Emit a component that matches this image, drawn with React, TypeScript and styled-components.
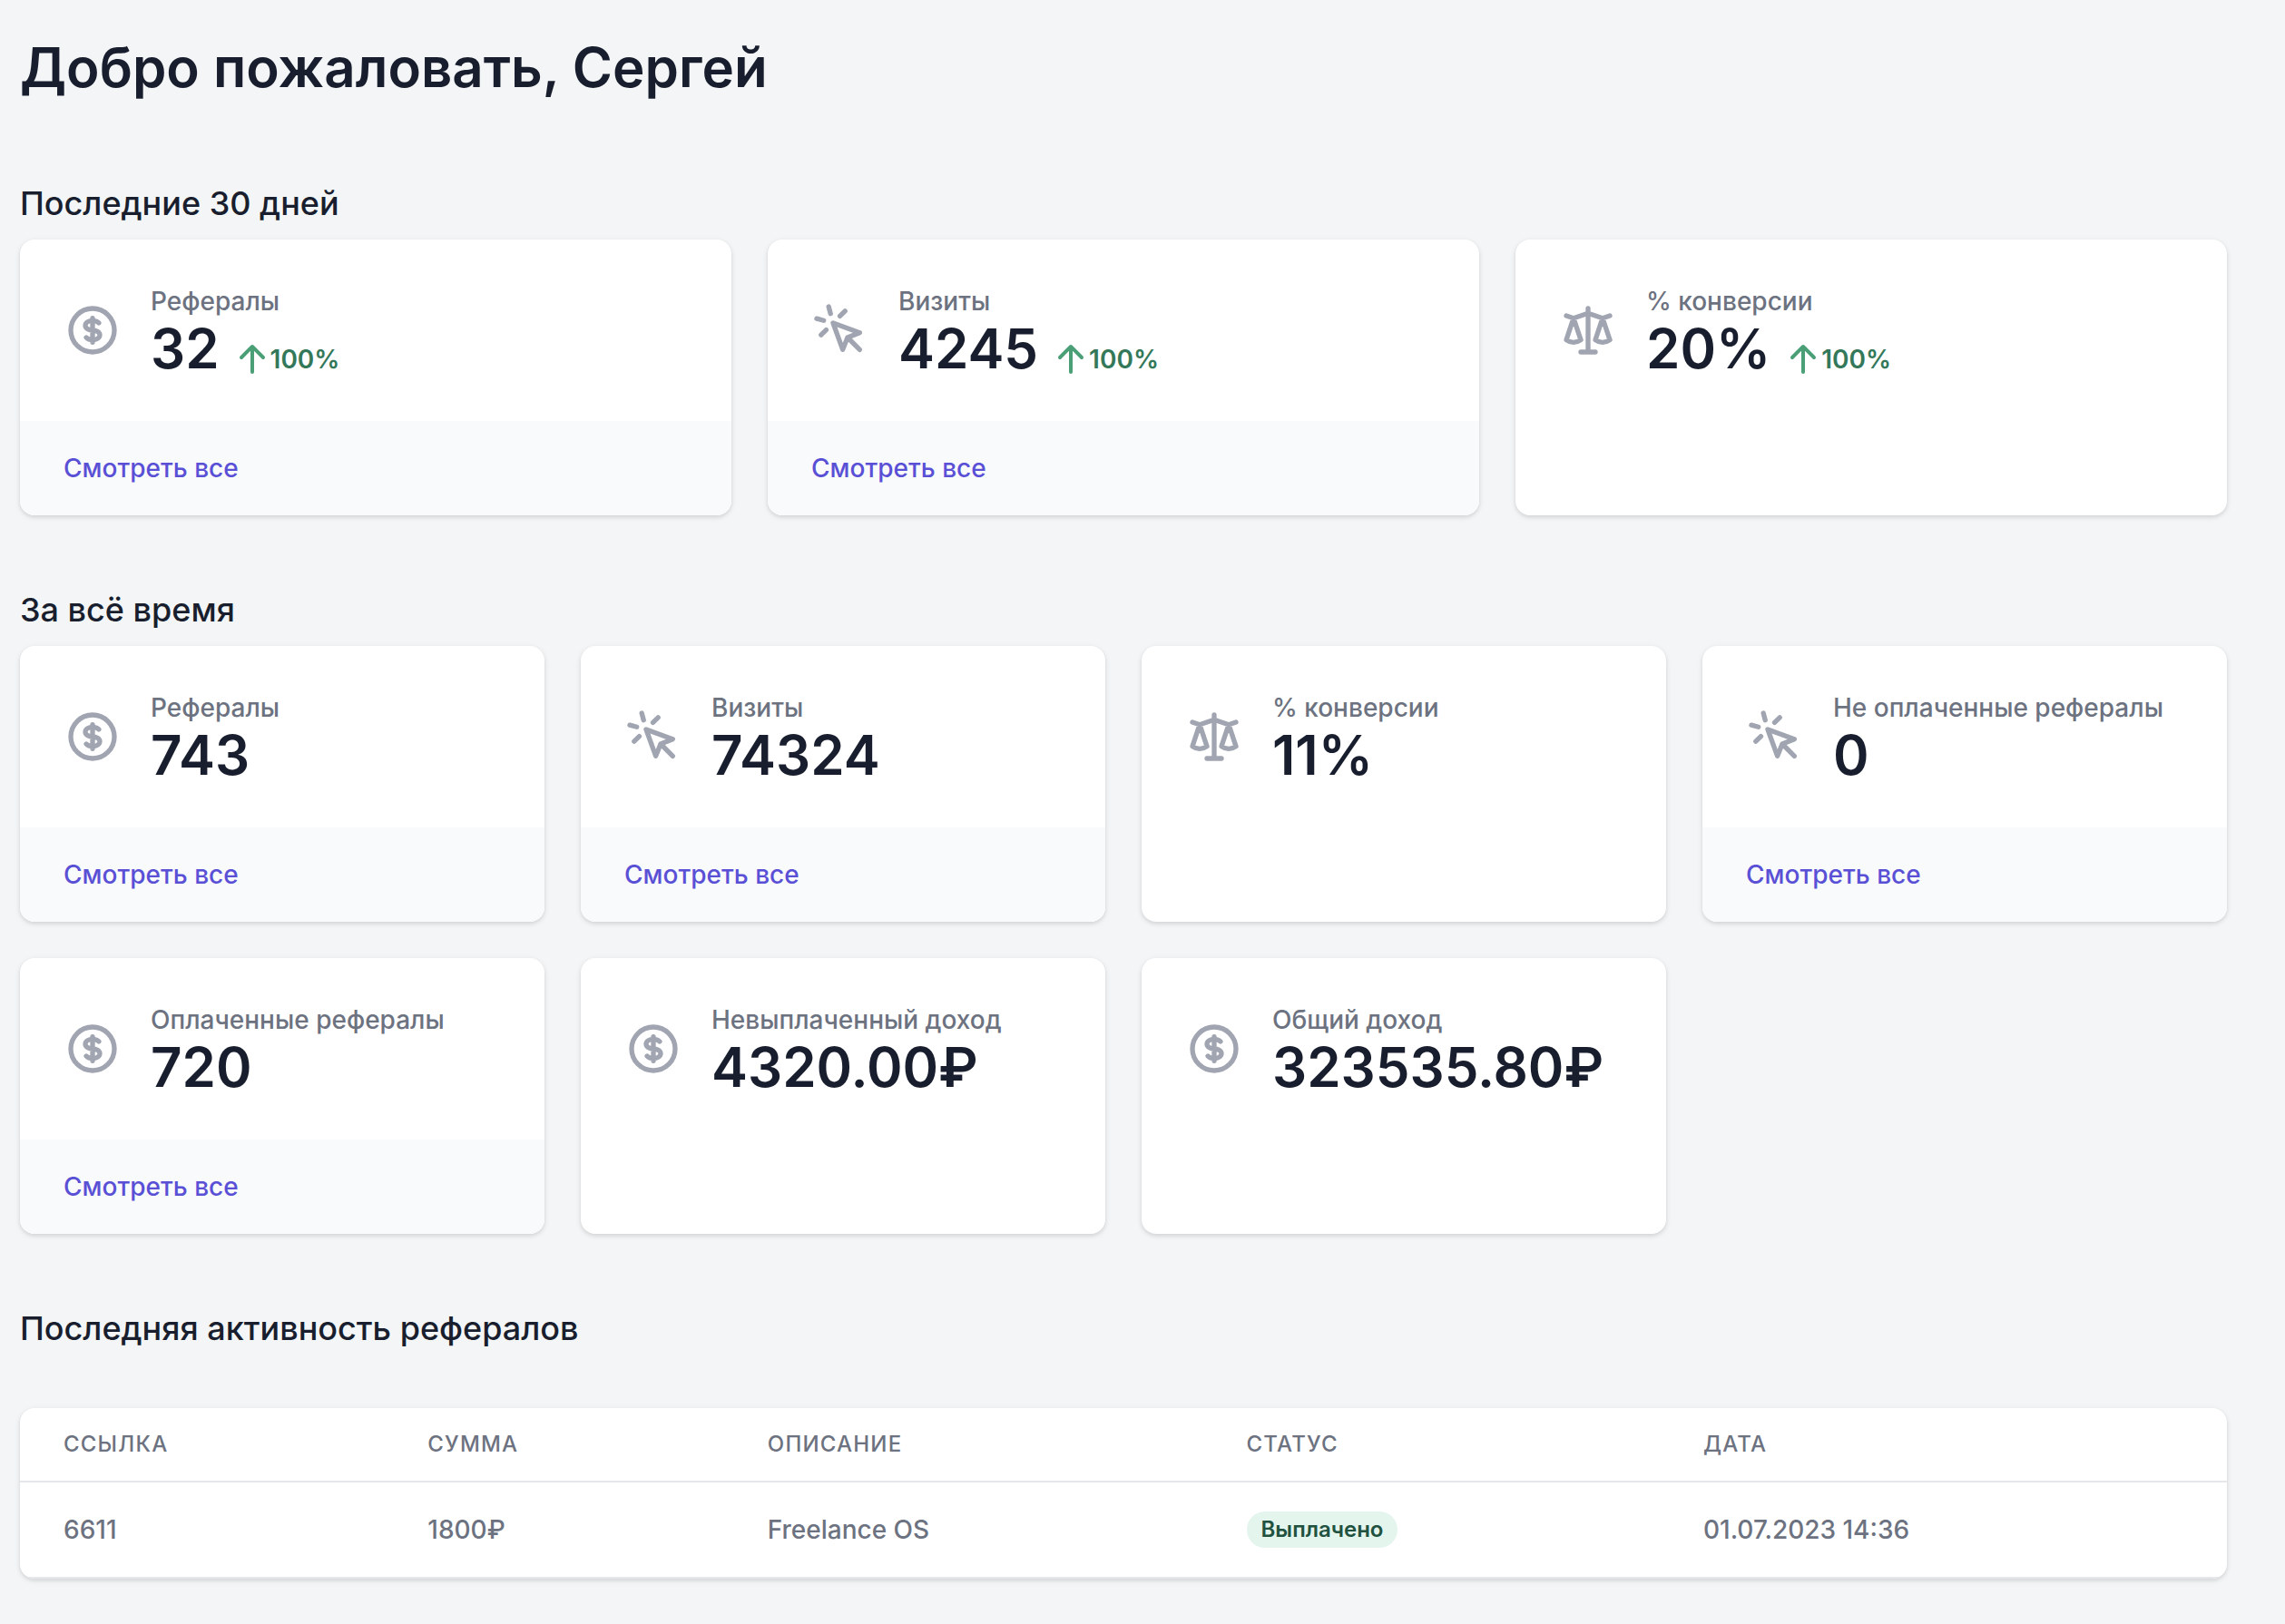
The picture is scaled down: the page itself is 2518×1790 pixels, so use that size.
import React from "react";
import styled, { createGlobalStyle } from "styled-components";

const GlobalStyle = createGlobalStyle`
  *, *::before, *::after { box-sizing: border-box; }
  body {
    margin: 0;
    background: #f3f5f7;
    color: #181e2d;
    font-family: Inter, "Noto Sans", sans-serif;
    font-size: 28px;
    line-height: 40px;
  }
  h1, h2, p, dl, dt, dd { margin: 0; }
`;

const Page = styled.main`
  padding: 44px 64px 50px 22px;
`;

const Title = styled.h1`
  font-size: 60px;
  line-height: 60px;
  font-weight: 600;
  margin-bottom: 96px;
`;

const Section = styled.section`
  & + & {
    margin-top: 80px;
  }
`;

const SectionTitle = styled.h2<{ $gap: number }>`
  font-size: 36px;
  line-height: 48px;
  font-weight: 500;
  margin-bottom: ${(p) => p.$gap}px;
`;

const CardGrid = styled.div<{ $columns: number }>`
  display: grid;
  grid-template-columns: repeat(${(p) => p.$columns}, minmax(0, 1fr));
  gap: 40px;
`;

const surface = `
  background: #ffffff;
  border-radius: 16px;
  overflow: hidden;
  box-shadow: 0 2px 6px rgba(0, 0, 0, 0.1), 0 2px 4px rgba(0, 0, 0, 0.06);
`;

const CardBox = styled.article`
  ${surface}
  display: flex;
  flex-direction: column;
`;

const CardBody = styled.div`
  display: flex;
  align-items: center;
  gap: 32px;
  padding: 48px;
`;

const CardIcon = styled.svg`
  flex: none;
  width: 64px;
  height: 64px;
  fill: none;
  stroke: #a0a5b1;
  stroke-width: 2;
  stroke-linecap: round;
  stroke-linejoin: round;
`;

const Label = styled.dt`
  color: #6c727f;
  font-weight: 500;
  white-space: nowrap;
`;

const ValueRow = styled.dd`
  display: flex;
  align-items: baseline;
  gap: 16px;
`;

const Value = styled.span`
  font-size: 60px;
  line-height: 64px;
  font-weight: 600;
`;

const Trend = styled.span`
  display: flex;
  align-items: baseline;
  color: #34785a;
  font-weight: 600;
`;

const TrendIcon = styled.svg`
  align-self: center;
  width: 40px;
  height: 40px;
  fill: #4a9f76;
`;

const CardFooter = styled.div`
  padding: 32px 48px;
  background: #f9fafc;
`;

const FooterLink = styled.a`
  color: #5a50d6;
  font-weight: 500;
  text-decoration: none;
`;

const TableBox = styled.div`
  ${surface}
`;

const Table = styled.table`
  width: 100%;
  border-collapse: separate;
  border-spacing: 0;
  table-layout: fixed;
  text-align: left;
`;

const HeadCell = styled.th<{ $width: string }>`
  width: ${(p) => p.$width};
  padding: 24px 48px;
  border-bottom: 2px solid #e5e7eb;
  color: #6c727f;
  font-size: 24px;
  line-height: 32px;
  font-weight: 500;
  letter-spacing: 0.05em;
  text-transform: uppercase;
`;

const Cell = styled.td`
  padding: 32px 48px;
  border-bottom: 2px solid #e5e7eb;
  color: #6c727f;
  font-weight: 500;
`;

const Badge = styled.span`
  display: inline-block;
  vertical-align: top;
  padding: 0 16px;
  border-radius: 20px;
  background: #e4f5ee;
  color: #21523f;
  font-size: 24px;
  font-weight: 600;
`;

const iconPaths = {
  dollar:
    "M12 8c-1.657 0-3 .895-3 2s1.343 2 3 2 3 .895 3 2-1.343 2-3 2m0-8c1.11 0 2.08.402 2.599 1M12 8V7m0 1v8m0 0v1m0-1c-1.11 0-2.08-.402-2.599-1M21 12a9 9 0 11-18 0 9 9 0 0118 0z",
  click:
    "M15 15l-2 5L9 9l11 4-5 2zm0 0l5 5M7.188 2.239l.777 2.897M5.136 7.965l-2.898-.777M13.95 4.05l-2.122 2.122m-5.657 5.656l-2.12 2.122",
  scale:
    "M3 6l3 1m0 0l-3 9a5.002 5.002 0 006.001 0M6 7l3 9M6 7l6-2m6 2l3-1m-3 1l-3 9a5.002 5.002 0 006.001 0M18 7l3 9m-3-9l-6-2m0-2v2m0 16V5m0 16H9m3 0h3",
};

type Stat = {
  icon: keyof typeof iconPaths;
  label: string;
  value: string;
  trend?: string;
  link?: boolean;
};

const recent: Stat[] = [
  { icon: "dollar", label: "Рефералы", value: "32", trend: "100%", link: true },
  { icon: "click", label: "Визиты", value: "4245", trend: "100%", link: true },
  { icon: "scale", label: "% конверсии", value: "20%", trend: "100%" },
];

const allTime: Stat[] = [
  { icon: "dollar", label: "Рефералы", value: "743", link: true },
  { icon: "click", label: "Визиты", value: "74324", link: true },
  { icon: "scale", label: "% конверсии", value: "11%" },
  { icon: "click", label: "Не оплаченные рефералы", value: "0", link: true },
  { icon: "dollar", label: "Оплаченные рефералы", value: "720", link: true },
  { icon: "dollar", label: "Невыплаченный доход", value: "4320.00₽" },
  { icon: "dollar", label: "Общий доход", value: "323535.80₽" },
];

const columns = [
  { title: "Ссылка", width: "16.5%" },
  { title: "Сумма", width: "15.4%" },
  { title: "Описание", width: "21.7%" },
  { title: "Статус", width: "20.7%" },
  { title: "Дата", width: "25.7%" },
];

const activity = [
  {
    id: "6611",
    amount: "1800₽",
    description: "Freelance OS",
    status: "Выплачено",
    date: "01.07.2023 14:36",
  },
];

function StatCard({ icon, label, value, trend, link }: Stat) {
  return (
    <CardBox>
      <CardBody>
        <CardIcon viewBox="0 0 24 24" aria-hidden="true">
          <path d={iconPaths[icon]} />
        </CardIcon>
        <dl>
          <Label>{label}</Label>
          <ValueRow>
            <Value>{value}</Value>
            {trend && (
              <Trend>
                <TrendIcon viewBox="0 0 20 20" aria-hidden="true">
                  <path d="M3.293 9.707a1 1 0 010-1.414l6-6a1 1 0 011.414 0l6 6a1 1 0 01-1.414 1.414L11 5.414V17a1 1 0 11-2 0V5.414L4.707 9.707a1 1 0 01-1.414 0z" />
                </TrendIcon>
                <span>{trend}</span>
              </Trend>
            )}
          </ValueRow>
        </dl>
      </CardBody>
      {link && (
        <CardFooter>
          <FooterLink href="#">Смотреть все</FooterLink>
        </CardFooter>
      )}
    </CardBox>
  );
}

export default function App() {
  return (
    <>
      <GlobalStyle />
      <Page>
        <Title>Добро пожаловать, Сергей</Title>
        <Section>
          <SectionTitle $gap={16}>Последние 30 дней</SectionTitle>
          <CardGrid $columns={3}>
            {recent.map((s) => (
              <StatCard key={s.label} {...s} />
            ))}
          </CardGrid>
        </Section>
        <Section>
          <SectionTitle $gap={16}>За всё время</SectionTitle>
          <CardGrid $columns={4}>
            {allTime.map((s) => (
              <StatCard key={s.label} {...s} />
            ))}
          </CardGrid>
        </Section>
        <Section>
          <SectionTitle $gap={64}>Последняя активность рефералов</SectionTitle>
          <TableBox>
            <Table>
              <thead>
                <tr>
                  {columns.map((c) => (
                    <HeadCell key={c.title} scope="col" $width={c.width}>
                      {c.title}
                    </HeadCell>
                  ))}
                </tr>
              </thead>
              <tbody>
                {activity.map((row) => (
                  <tr key={row.id}>
                    <Cell>{row.id}</Cell>
                    <Cell>{row.amount}</Cell>
                    <Cell>{row.description}</Cell>
                    <Cell>
                      <Badge>{row.status}</Badge>
                    </Cell>
                    <Cell>{row.date}</Cell>
                  </tr>
                ))}
              </tbody>
            </Table>
          </TableBox>
        </Section>
      </Page>
    </>
  );
}
